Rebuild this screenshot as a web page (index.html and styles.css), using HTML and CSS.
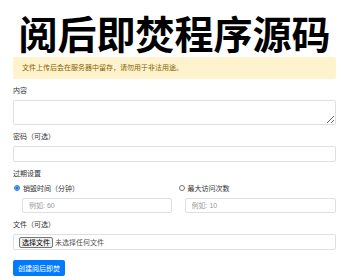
FILE: index.html
```html
<!DOCTYPE html>
<html lang="zh-CN">
<head>
    <meta charset="UTF-8">
    <meta name="viewport" content="width=device-width, initial-scale=1.0">
    <title>阅后即焚程序源码</title>
    <link rel="stylesheet" href="styles.css">
</head>
<body>
    <div class="container">
        <h1 class="title">阅后即焚程序源码</h1>

        <div class="alert">文件上传后会在服务器中留存，请勿用于非法用途。</div>

        <form class="burn-form">
            <div class="form-group">
                <label class="form-label">内容</label>
                <textarea class="form-control form-textarea"></textarea>
            </div>

            <div class="form-group">
                <label class="form-label">密码（可选）</label>
                <input type="password" class="form-control">
            </div>

            <div class="form-group">
                <label class="form-label">过期设置</label>
                <div class="expire-grid">
                    <div class="expire-col">
                        <label class="radio-line">
                            <input type="radio" name="expire" class="radio" checked>
                            <span>销毁时间（分钟）</span>
                        </label>
                        <input type="text" class="form-control expire-input" placeholder="例如: 60">
                    </div>
                    <div class="expire-col">
                        <label class="radio-line">
                            <input type="radio" name="expire" class="radio">
                            <span>最大访问次数</span>
                        </label>
                        <input type="text" class="form-control expire-input expire-input-right" placeholder="例如: 10">
                    </div>
                </div>
            </div>

            <div class="form-group">
                <label class="form-label">文件（可选）</label>
                <div class="form-control file-box">
                    <span class="file-btn">选择文件</span>
                    <span class="file-name">未选择任何文件</span>
                </div>
            </div>

            <button type="button" class="btn-primary">创建阅后即焚</button>
        </form>
    </div>
</body>
</html>
```

FILE: styles.css
```css
* {
    margin: 0;
    padding: 0;
    box-sizing: border-box;
}

body {
    font-family: "Liberation Sans", "Noto Sans CJK SC", sans-serif;
    background: #fff;
    color: #212529;
}

.container {
    padding: 0 14px 0 13px;
}

.title {
    font-family: "Noto Sans CJK SC", sans-serif;
    font-weight: 700;
    font-size: 39px;
    line-height: 42px;
    text-align: center;
    color: #000;
    margin-top: 11px;
}

.alert {
    margin-top: 4px;
    height: 22px;
    line-height: 22px;
    padding: 0 9px;
    background: #fff3cd;
    color: #856404;
    font-size: 7px;
    border-radius: 2px;
}

.burn-form {
    margin-top: 7px;
}

.form-group {
    margin-bottom: 7px;
}

.form-label {
    display: block;
    font-size: 7px;
    line-height: 10px;
    margin-bottom: 4px;
    color: #333;
}

.form-control {
    display: block;
    width: 100%;
    height: 16px;
    border: 1px solid #dcdfe3;
    border-radius: 2px;
    background: #fff;
    font-family: inherit;
    font-size: 7px;
    padding: 0 6px;
    color: #495057;
    outline: none;
}

.form-control::placeholder {
    color: #999;
}

.form-textarea {
    height: 25px;
    resize: vertical;
}

.expire-grid {
    display: grid;
    grid-template-columns: 1fr 1fr;
    gap: 6px;
    margin-top: 3px;
}

.radio-line {
    display: flex;
    align-items: center;
    height: 10px;
    font-size: 7px;
    color: #333;
}

.radio {
    width: 6px;
    height: 6px;
    margin: 0 3px 0 1px;
    accent-color: #1a73e8;
}

.expire-input {
    margin-top: 5px;
    margin-left: 9px;
    width: calc(100% - 9px);
    height: 15px;
}

.expire-input-right {
    margin-left: 7px;
    width: calc(100% - 7px);
}

.file-box {
    display: flex;
    align-items: center;
    padding: 0 5px;
}

.file-btn {
    display: inline-block;
    height: 11px;
    line-height: 9px;
    padding: 0 2px;
    background: #efefef;
    border: 1px solid #767676;
    border-radius: 2px;
    color: #000;
    font-size: 7px;
}

.file-name {
    margin-left: 2px;
    color: #555;
}

.btn-primary {
    margin-top: 0;
    width: 52px;
    height: 16px;
    background: #007bff;
    border: none;
    border-radius: 2px;
    color: #fff;
    font-family: inherit;
    font-size: 7px;
}
```
